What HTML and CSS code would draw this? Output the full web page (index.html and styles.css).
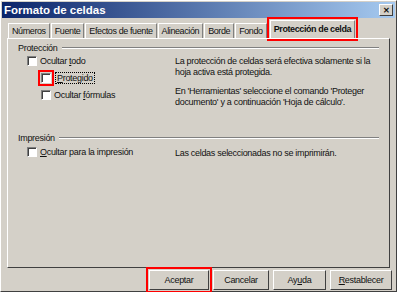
FILE: index.html
```html
<!DOCTYPE html>
<html lang="es">
<head>
    <meta charset="UTF-8">
    <title>Formato de celdas</title>
    <link rel="stylesheet" href="styles.css">
</head>
<body>
    <div class="window">
        <div class="titlebar">
            <span class="title">Formato de celdas</span>
            <span class="close">&#x2715;</span>
        </div>

        <div class="tabs">
            <div class="tab">Números</div>
            <div class="tab">Fuente</div>
            <div class="tab">Efectos de fuente</div>
            <div class="tab">Alineación</div>
            <div class="tab">Borde</div>
            <div class="tab">Fondo</div>
            <div class="tab active mark">Protección de celda</div>
        </div>

        <div class="panel">
            <div class="group protect">
                <div class="legend"><span>Protección</span><i></i></div>
                <div class="cols">
                    <div class="opts">
                        <label class="check"><span class="box"></span><span>Ocultar <u>t</u>odo</span></label>
                        <label class="check sub"><span class="box mark"></span><span class="focus"><u>P</u>rotegido</span></label>
                        <label class="check sub"><span class="box"></span><span>Ocultar <u>f</u>órmulas</span></label>
                    </div>
                    <div class="info">
                        <p>La protección de celdas será efectiva solamente si la hoja activa está protegida.</p>
                        <p>En 'Herramientas' seleccione el comando 'Proteger documento' y a continuación 'Hoja de cálculo'.</p>
                    </div>
                </div>
            </div>

            <div class="group print">
                <div class="legend"><span>Impresión</span><i></i></div>
                <div class="cols">
                    <div class="opts">
                        <label class="check"><span class="box"></span><span><u>O</u>cultar para la impresión</span></label>
                    </div>
                    <div class="info">
                        <p>Las celdas seleccionadas no se imprimirán.</p>
                    </div>
                </div>
            </div>
        </div>

        <div class="buttons">
            <button class="ok mark">Aceptar</button>
            <button class="cancel">Cancelar</button>
            <button class="help">Ay<u>u</u>da</button>
            <button class="reset"><u>R</u>establecer</button>
        </div>
    </div>
</body>
</html>
```

FILE: styles.css
```css
body {
    margin: 0;
    font-family: "Liberation Sans", Arial, sans-serif;
    font-size: 9px;
    letter-spacing: -0.3px;
    color: #111;
}
.window {
    width: 397px;
    height: 292px;
    box-sizing: border-box;
    background: #d4d0c8;
    border: 1px solid #fff;
    border-right-color: #404040;
    border-bottom-color: #404040;
    display: flex;
    flex-direction: column;
}
.titlebar {
    height: 16px;
    margin: 1px 1px 0;
    background: linear-gradient(to right, #0a246a, #a6caf0);
    display: flex;
    align-items: center;
    justify-content: space-between;
    padding: 0 2px 0 2px;
}
.title {
    color: #fff;
    font-weight: bold;
    font-size: 11.5px;
    letter-spacing: 0;
}
.close {
    width: 12px;
    height: 10px;
    background: #d4d0c8;
    border: 1px solid #fff;
    border-right-color: #404040;
    border-bottom-color: #404040;
    font-size: 8px;
    font-weight: bold;
    display: flex;
    align-items: center;
    justify-content: center;
}
.tabs {
    display: flex;
    align-items: flex-end;
    margin: 3px 0 0 7px;
    height: 17px;
    letter-spacing: -0.4px;
}
.tab {
    border: 1px solid #fff;
    border-bottom: none;
    border-right-color: #808080;
    padding: 1px 3px;
    margin-right: 1px;
    height: 12px;
    line-height: 12px;
}
.tab.active {
    font-weight: bold;
    height: 14px;
    padding: 2px 3px 1px;
    margin-left: 2px;
}
.mark {
    outline: 2px solid #f00;
    outline-offset: 1px;
}
.panel {
    margin: 0 6px 0 6px;
    height: 225px;
    border: 1px solid #fff;
    border-right-color: #404040;
    border-bottom-color: #404040;
    padding: 3px 10px 0 10px;
}
.legend {
    display: flex;
    align-items: center;
    gap: 4px;
    height: 11px;
}
.legend i {
    flex: 1;
    border-top: 1px solid #808080;
    border-bottom: 1px solid #fff;
}
.protect {
    height: 90px;
}
.cols {
    display: flex;
}
.opts {
    width: 148px;
    padding-left: 9px;
    display: flex;
    flex-direction: column;
    gap: 6px;
    padding-top: 2px;
}
.check {
    display: flex;
    align-items: center;
    gap: 3px;
    height: 11px;
}
.check.sub {
    padding-left: 14px;
}
.box {
    width: 8px;
    height: 8px;
    background: #fff;
    border: 1px solid #808080;
    border-right-color: #fff;
    border-bottom-color: #fff;
    box-shadow: inset 1px 1px 0 #404040;
}
.focus {
    outline: 1px dotted #000;
    padding: 0 1px;
    margin-left: 2px;
}
.info {
    padding-top: 3px;
}
.info p {
    margin: 0 0 8px;
    width: 200px;
    line-height: 11px;
}
.print .opts {
    padding-top: 3px;
}
.print .info {
    padding-top: 5px;
}
.buttons {
    display: flex;
    justify-content: flex-end;
    gap: 4px;
    margin: 2px 4px 0 0;
}
.buttons button {
    font-family: inherit;
    font-size: 9px;
    letter-spacing: -0.3px;
    color: #111;
    background: #d4d0c8;
    height: 20px;
    border: 1px solid #fff;
    border-right-color: #404040;
    border-bottom-color: #404040;
    padding: 0;
}
.ok { width: 60px; }
.cancel { width: 56px; }
.help { width: 53px; }
.reset { width: 62px; }
```
